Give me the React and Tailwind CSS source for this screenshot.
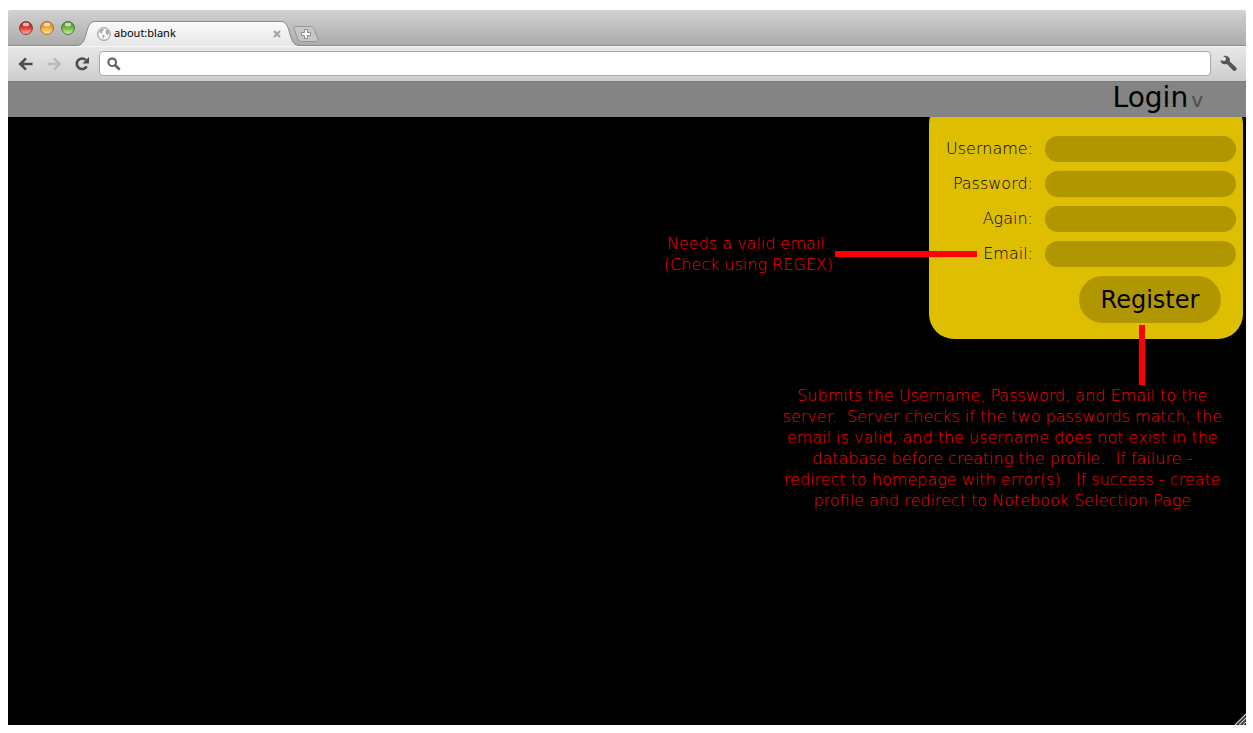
import React from "react";

const LIGHTS = [
  { name: "Close window", id: "red", dark: "#a81c1c", mid: "#e23b3b", light: "#ffb9b9", edge: "#7d2a26" },
  { name: "Minimize window", id: "amber", dark: "#d97a1c", mid: "#f3a93c", light: "#fff08a", edge: "#94602a" },
  { name: "Zoom window", id: "green", dark: "#3f8a25", mid: "#78b846", light: "#d6f59a", edge: "#3f6a2c" },
];

const FIELDS = [
  { id: "username", label: "Username:", type: "text" },
  { id: "password", label: "Password:", type: "password" },
  { id: "again", label: "Again:", type: "password" },
  { id: "email", label: "Email:", type: "email" },
];

function TrafficLight({ light }) {
  return (
    <button type="button" aria-label={light.name} className="size-3.5">
      <svg viewBox="0 0 14 14" className="block size-3.5">
        <defs>
          <linearGradient id={light.id} x1="0" y1="0" x2="0" y2="1">
            <stop offset="0" stopColor={light.dark} />
            <stop offset="0.5" stopColor={light.mid} />
            <stop offset="1" stopColor={light.light} />
          </linearGradient>
        </defs>
        <circle cx="7" cy="7" r="6.4" fill={`url(#${light.id})`} stroke={light.edge} strokeWidth="0.9" />
        <ellipse cx="7" cy="3.4" rx="3.2" ry="1.9" fill="#fff" opacity="0.65" />
      </svg>
    </button>
  );
}

function TabStrip() {
  return (
    <div className="flex h-9 items-end rounded-t-[2px] border-b border-[#8b8b8b] bg-linear-to-b from-[#d2d2d2] to-[#ababab] pl-[11px]">
      <div className="flex gap-[7px] pb-[10px]">
        {LIGHTS.map((light) => (
          <TrafficLight key={light.id} light={light} />
        ))}
      </div>
      <div className="relative -mb-px ml-px h-[25px] w-56">
        <svg viewBox="0 0 224 25" className="absolute inset-0 h-[25px] w-56">
          <defs>
            <linearGradient id="tab" x1="0" y1="0" x2="0" y2="1">
              <stop offset="0" stopColor="#fbfbfb" />
              <stop offset="1" stopColor="#e6e6e6" />
            </linearGradient>
          </defs>
          <path d="M0 25C6 24.5 7.500 21 9.500 15C12 6.500 13 .5 19 .5H205C211 .5 212 6.500 214.500 15C216.500 21 218 24.500 224 25Z" fill="url(#tab)" />
          <path d="M0 24.500C6 24.500 7.500 21 9.500 15C12 6.500 13 .5 19 .5H205C211 .5 212 6.500 214.500 15C216.500 21 218 24.500 224 24.500" fill="none" stroke="#8b8b8b" />
        </svg>
        <div className="relative flex h-[25px] items-center pr-[19px] pl-[21px]">
          <svg viewBox="0 0 14 14" className="size-3.5">
            <circle cx="7" cy="7" r="6.300" fill="#fafafa" stroke="#8a8a8a" />
            <path d="M2.500 4L4.300 2.200L7 2.300L6.200 3.800L4.800 4.600L5.400 5.800L4.200 6.400L2.800 5.600ZM5.300 7.800L7.300 8.100L7.700 9.300L6.500 11L6.100 12L5.400 10.300ZM8.800 2.500L10.600 2.900L12.100 5L11.600 7.600L10.400 8.800L9.900 7.200L8.600 6.200L9 4.600Z" fill="#a6a6a6" />
          </svg>
          <span className="ml-[3px] flex-1 font-['Noto_Sans',sans-serif] text-[11px] text-black">about:blank</span>
          <button type="button" aria-label="Close tab" className="size-2">
            <svg viewBox="0 0 8 8" className="block size-2">
              <path d="M1 1L7 7M7 1L1 7" stroke="#a6a6a6" strokeWidth="2.200" />
            </svg>
          </button>
        </div>
      </div>
      <button type="button" aria-label="New tab" className="relative mb-[3px] -ml-2 h-4 w-7">
        <svg viewBox="0 0 28 16" className="block h-4 w-7">
          <path d="M3 .5H18C20.500 .5 21.500 1.500 22.500 4L26 13C26.600 14.800 26 15.500 24.500 15.500H10C7.500 15.500 6.500 14.500 5.500 12L2 2.500C1.500 1.200 2 .5 3 .5Z" fill="#c6c6c6" stroke="#979797" />
          <path d="M12.500 3.500H15.500V6.500H18.500V9.500H15.500V12.500H12.500V9.500H9.500V6.500H12.500Z" fill="#fafafa" stroke="#8c8c8c" />
        </svg>
      </button>
    </div>
  );
}

function Toolbar() {
  return (
    <div className="flex h-9 items-center border-t border-b border-t-[#f6f6f6] border-b-[#7c7c7c] bg-linear-to-b from-[#e8e8e8] to-[#cdcdcd] pr-[9px] pb-px pl-[10px]">
      <div className="flex gap-3">
        <button type="button" aria-label="Back" className="size-4">
          <svg viewBox="0 0 16 16" className="block size-4">
            <path d="M8 2.300L2.200 8L8 13.700M2.500 8H14.500" fill="none" stroke="#4c4c4c" strokeWidth="2.500" />
          </svg>
        </button>
        <button type="button" aria-label="Forward" className="size-4">
          <svg viewBox="0 0 16 16" className="block size-4">
            <path d="M8 2.300L13.800 8L8 13.700M13.500 8H1.500" fill="none" stroke="#b9b9b9" strokeWidth="2.500" />
          </svg>
        </button>
        <button type="button" aria-label="Reload" className="size-4">
          <svg viewBox="0 0 16 16" className="block size-4">
            <path d="M11.800 4A5.300 5.300 0 1 0 12.700 10.300" fill="none" stroke="#4c4c4c" strokeWidth="2.600" />
            <path d="M15 1V7.500H8.500Z" fill="#4c4c4c" />
          </svg>
        </button>
      </div>
      <label className="ml-[9px] flex h-[25px] flex-1 items-center rounded-[4px] border border-[#a8a8a8] bg-white pl-[7px]">
        <svg viewBox="0 0 14 14" className="size-3.5">
          <circle cx="5.200" cy="5.200" r="3.800" fill="none" stroke="#5c5c5c" strokeWidth="2" />
          <path d="M8 8L12.700 12.700" stroke="#5c5c5c" strokeWidth="2.600" />
        </svg>
        <input type="text" aria-label="Address" className="ml-1 h-5 flex-1 bg-transparent text-xs outline-none" />
      </label>
      <button type="button" aria-label="Settings" className="ml-[9px] size-[17px]">
        <svg viewBox="0 0 17 17" className="block size-[17px]">
          <path d="M3.200 1.200C5.500 .4 8.500 1 9.600 3.600C10 4.700 9.900 5.700 9.700 6.400L16 12.300C17.100 13.400 16.600 14.900 15.700 15.500C14.800 16.200 13.600 16 12.800 15.200L7 9.100C4.500 9.800 1.700 9 .6 6.200L1.200 5.200L4.300 6.300L6 4.600L5.700 2.600Z" fill="#555" />
        </svg>
      </button>
    </div>
  );
}

function RegisterPanel() {
  return (
    <form
      onSubmit={(event) => event.preventDefault()}
      className="-mt-[18px] mr-[3px] ml-auto flex w-[314px] flex-col gap-[9px] rounded-[25px] bg-[#debe00] pt-[37px] pr-[7px] pb-4"
    >
      {FIELDS.map((field) => (
        <div key={field.id} className="flex items-center justify-end gap-3">
          <label htmlFor={field.id} className="text-base font-extralight">{field.label}</label>
          <input
            id={field.id}
            type={field.type}
            className="h-[26px] w-[191px] rounded-full bg-[#b09600] px-3 text-sm outline-none"
          />
        </div>
      ))}
      <button type="submit" className="mr-[15px] h-[47px] w-[142px] self-end rounded-full bg-[#b09600] text-2xl">
        Register
      </button>
    </form>
  );
}

function EmailNote() {
  return (
    <div className="absolute top-[116px] right-[269px] flex items-center gap-[2px]">
      <p className="text-center text-base leading-[21px] font-extralight whitespace-pre text-[#ff0000]">
        Needs a valid email.
        <br />
        (Check using REGEX)
      </p>
      <div className="h-[6px] w-[142px] bg-[#ff0000]" />
    </div>
  );
}

function SubmitNote() {
  const lines = [
    "Submits the Username, Password, and Email to the",
    "server.  Server checks if the two passwords match, the",
    "email is valid, and the username does not exist in the",
    "database before creating the profile.  If failure -",
    "redirect to homepage with error(s).  If success - create",
    "profile and redirect to Notebook Selection Page",
  ];
  return (
    <div className="absolute top-[208px] right-6 flex flex-col">
      <div className="mr-[77px] h-[60px] w-[6px] self-end bg-[#ff0000]" />
      <p className="text-center text-base leading-[21px] font-extralight whitespace-pre text-[#ff0000]">
        {lines.join("\n")}
      </p>
    </div>
  );
}

export default function App() {
  return (
    <div className="flex min-h-screen flex-col bg-white pt-[10px] pr-[7px] pb-2 pl-2 font-['DejaVu_Sans',Verdana,sans-serif] text-black">
      <TabStrip />
      <Toolbar />
      <header className="flex h-[35px] items-center justify-end bg-[#848484] pr-[43px] pb-1">
        <button type="button" className="flex items-baseline gap-[3px] text-[28px] leading-8">
          Login
          <span className="text-xl text-[#4d4d4d]">v</span>
        </button>
      </header>
      <main className="relative flex-1 overflow-hidden bg-black">
        <RegisterPanel />
        <EmailNote />
        <SubmitNote />
        <svg viewBox="0 0 12 12" className="absolute right-0 bottom-0 size-3">
          <path d="M1 12L12 1M5 12L12 5M9 12L12 9" stroke="#c4c4c4" strokeWidth="1.300" />
          <path d="M2.500 12L12 2.500M6.500 12L12 6.500" stroke="#777" strokeWidth="1" />
        </svg>
      </main>
    </div>
  );
}
